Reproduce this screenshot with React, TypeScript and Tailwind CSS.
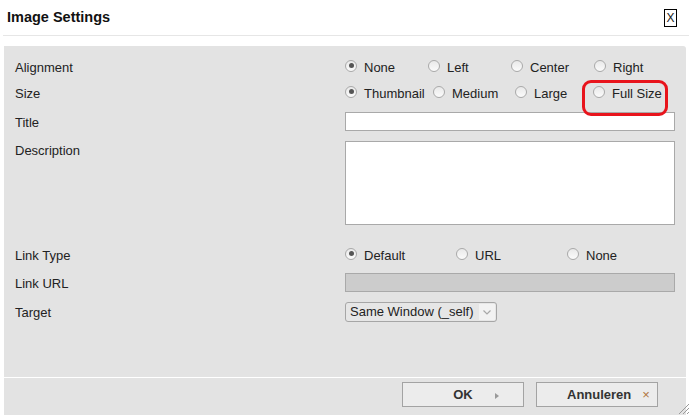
import React from 'react';

const font = "font-['Liberation_Sans',Arial,sans-serif]";

function Radio({ checked = false }: { checked?: boolean }) {
  return (
    <span className="mb-[3px] mr-[7px] flex h-[12px] w-[12px] shrink-0 items-center justify-center rounded-full border border-[#a9a9a9] bg-gradient-to-b from-[#e9e9e9] to-[#fbfbfb]">
      {checked && <span className="h-[5px] w-[5px] rounded-full bg-[#555]" />}
    </span>
  );
}

function Option({ label, width, checked }: { label: string; width?: string; checked?: boolean }) {
  return (
    <label className={`flex items-center ${width ?? ''}`}>
      <Radio checked={checked} />
      <span className="pt-[2px]">{label}</span>
    </label>
  );
}

function Row({ label, className, children, top }: { label: string; className: string; children: React.ReactNode; top?: boolean }) {
  return (
    <div className={`flex ${top ? 'items-start' : 'items-center'} ${className}`}>
      <div className={`w-[341px] pl-[11px] ${top ? 'pt-px leading-[18px]' : 'pt-[2px]'}`}>{label}</div>
      <div className="flex w-[330px] items-center">{children}</div>
    </div>
  );
}

export default function App() {
  return (
    <div className={`relative h-[415px] w-[692px] overflow-hidden bg-white text-[13px] text-[#222] ${font}`}>
      {/* header */}
      <div className="flex h-[35px] items-center justify-between pl-[7px] pr-[15px]">
        <h1 className="text-[14.5px] font-bold text-[#111]">Image Settings</h1>
        <button className="flex h-[18px] w-[13px] items-center justify-center border border-black text-[12px] leading-none text-[#222]">
          X
        </button>
      </div>
      <div className="mx-[3px] h-px bg-[#e6e6e6]" />

      {/* panel */}
      <div className="ml-[4px] mt-[10px] flex h-[369px] w-[682px] flex-col rounded-tr-[3px] bg-[#e3e3e3]">
        <div className="h-[331px] pt-[11px]">
          <Row label="Alignment" className="h-[20px]">
            <Option label="None" width="w-[83px]" checked />
            <Option label="Left" width="w-[83px]" />
            <Option label="Center" width="w-[83px]" />
            <Option label="Right" />
          </Row>
          <Row label="Size" className="mt-[6px] h-[20px]">
            <Option label="Thumbnail" width="w-[88px]" checked />
            <Option label="Medium" width="w-[82px]" />
            <Option label="Large" width="w-[78px]" />
            <Option label="Full Size" />
          </Row>
          <Row label="Title" className="mt-[9px] h-[19px]">
            <input className="h-[19px] w-[330px] border border-[#a9a9a9] bg-white outline-none" />
          </Row>
          <Row label="Description" className="mt-[10px]" top>
            <textarea className="h-[84px] w-[330px] resize-none border border-[#a9a9a9] bg-white outline-none" />
          </Row>
          <Row label="Link Type" className="mt-[20px] h-[20px]">
            <Option label="Default" width="w-[111px]" checked />
            <Option label="URL" width="w-[111px]" />
            <Option label="None" />
          </Row>
          <Row label="Link URL" className="mt-[8px] h-[19px]">
            <input disabled className="h-[19px] w-[330px] border border-[#a9a9a9] bg-[#cccccc]" />
          </Row>
          <Row label="Target" className="mt-[10px] h-[20px]">
            <div className="flex h-[20px] w-[152px] items-center justify-between rounded-[3px] border border-[#a6a6a6] bg-[#e6e6e6] pl-[4px] pr-px">
              <span className="text-[#222]">Same Window (_self)</span>
              <span className="flex h-[16px] w-[16px] items-center justify-center bg-[#f2f2f2]">
                <svg width="8" height="5" viewBox="0 0 8 5">
                  <path d="M0.5 0.5 L4 4 L7.5 0.5" fill="none" stroke="#a8a8a8" strokeWidth="1.2" />
                </svg>
              </span>
            </div>
          </Row>
        </div>
        <div className="h-px bg-white" />
        <div className="flex justify-end gap-[12px] pr-[28px] pt-[4px]">
          <button className="relative flex h-[25px] w-[122px] items-center justify-center border border-[#a3a3a3] bg-[#ececec] font-bold text-[#333]">
            OK
            <svg className="absolute right-[24px] top-[10px]" width="4" height="6" viewBox="0 0 4 6">
              <path d="M0 0 L4 3 L0 6 Z" fill="#999" />
            </svg>
          </button>
          <button className="flex h-[25px] w-[122px] items-center border border-[#a3a3a3] bg-[#ececec] pl-[30px] font-bold text-[#333]">
            Annuleren
            <span className="ml-[11px] text-[13px] font-normal text-[#b0763c]">×</span>
          </button>
        </div>
      </div>

      {/* resize grip */}
      <svg className="absolute bottom-0 right-[2px]" width="14" height="14" viewBox="0 0 14 14">
        <path d="M13 3 L3 13 M13 7 L7 13 M13 11 L11 13" stroke="#9a9a9a" strokeWidth="1" />
      </svg>

      {/* highlight annotation */}
      <div className="pointer-events-none absolute left-[582px] top-[80px] h-[36px] w-[86px] rounded-[9px] border-[3px] border-[#e8141c]" />
    </div>
  );
}
